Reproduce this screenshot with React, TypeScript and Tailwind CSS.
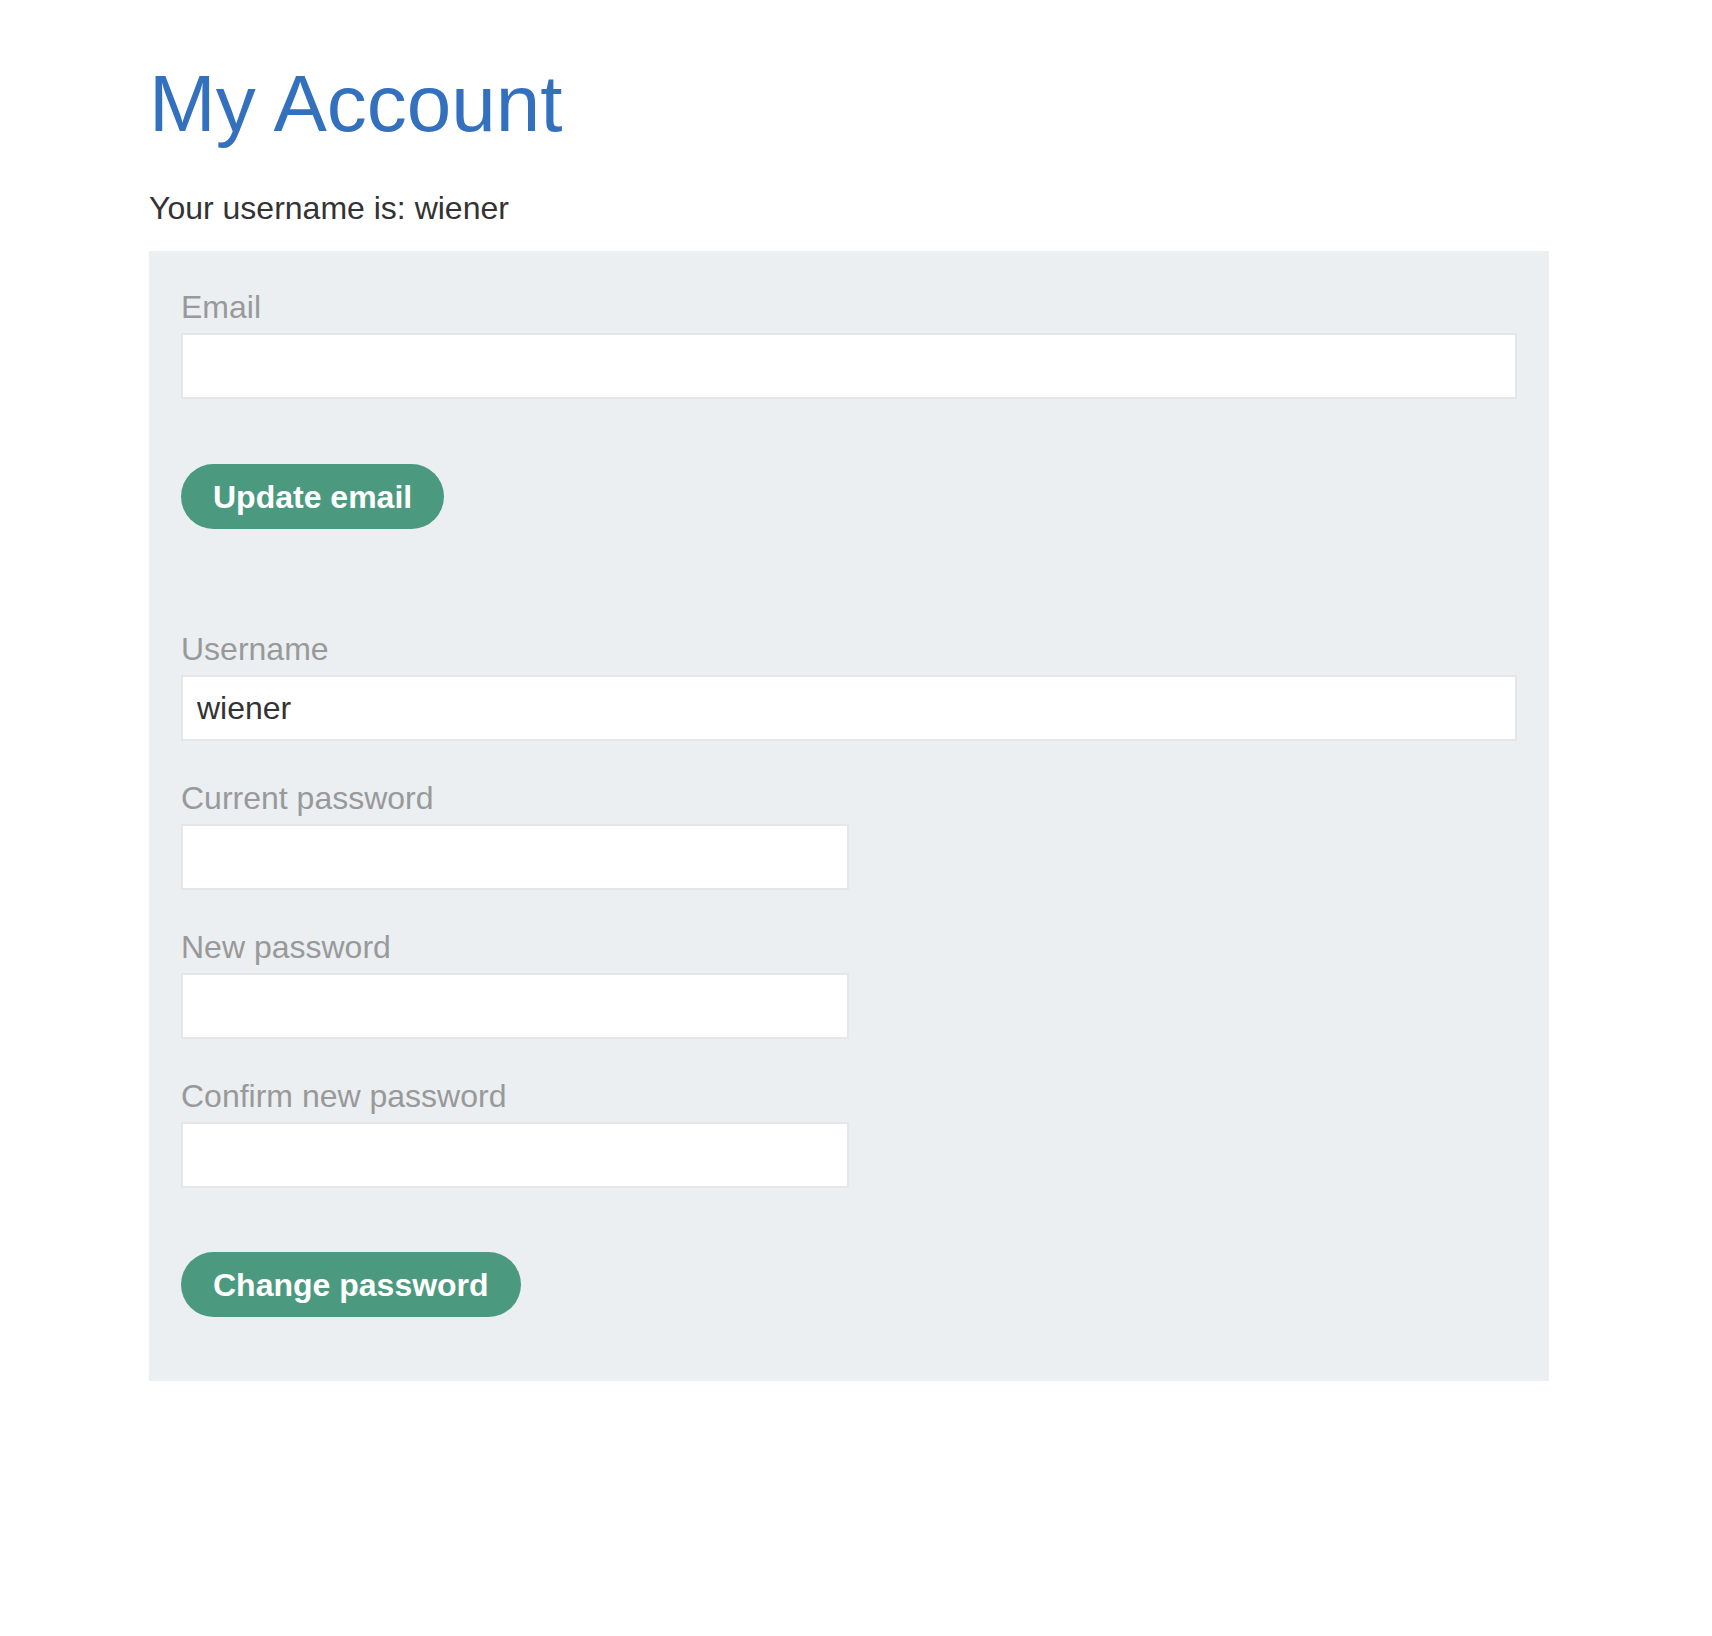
import React from "react";

const Field = ({ label, value, wide }: { label: string; value?: string; wide?: boolean }) => (
  <div className="flex flex-col">
    <label className="text-[32px] leading-[40px] text-[#999999]">{label}</label>
    <input
      type="text"
      defaultValue={value}
      className={`mt-[6px] h-[66px] border-2 border-[#e6e6e6] bg-white px-[14px] text-[32px] text-[#333333] outline-none ${
        wide ? "w-full" : "w-[668px]"
      }`}
    />
  </div>
);

const GreenButton = ({ children }: { children: React.ReactNode }) => (
  <button className="h-[65px] self-start rounded-[33px] bg-[#4b9a80] px-[32px] text-[32px] font-bold text-white">
    {children}
  </button>
);

export default function App() {
  return (
    <div className="min-h-[1636px] bg-white font-['Liberation_Sans',Arial,sans-serif]">
      <div className="ml-[149px] w-[1400px]">
        <h1 className="pt-[58px] text-[80px] leading-[92px] text-[#3371be]">My Account</h1>
        <p className="mt-[38px] text-[32px] leading-[40px] text-[#333333]">Your username is: wiener</p>

        <div className="mt-[23px] flex flex-col bg-[#ebeff2] px-[32px] pt-[36px] pb-[64px]">
          {/* email form */}
          <Field label="Email" wide />
          <div className="mt-[65px]">
            <GreenButton>Update email</GreenButton>
          </div>

          {/* password form */}
          <div className="mt-[100px] flex flex-col gap-[37px]">
            <Field label="Username" value="wiener" wide />
            <Field label="Current password" />
            <Field label="New password" />
            <Field label="Confirm new password" />
          </div>
          <div className="mt-[64px]">
            <GreenButton>Change password</GreenButton>
          </div>
        </div>
      </div>
    </div>
  );
}
